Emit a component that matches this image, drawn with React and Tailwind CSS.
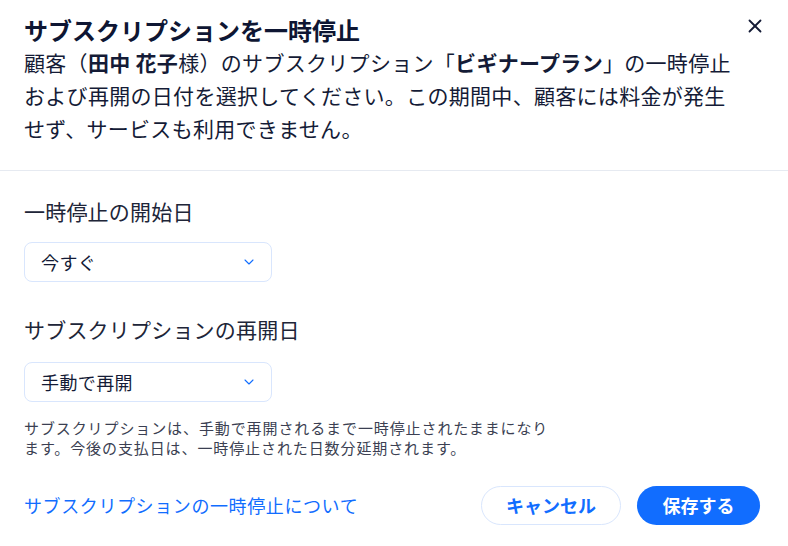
import { ChevronDown, X } from "lucide-react";

const font = { fontFamily: '"Noto Sans CJK JP", "Noto Sans", sans-serif' };

function Select({ value }) {
  return (
    <div className="flex items-center justify-between w-[248px] h-[40px] rounded-[8px] border border-[#d9e6fd] bg-white pl-[16px] pr-[14px]">
      <span className="text-[18px] leading-[24px] text-[#141b36] tracking-[0.4px]">{value}</span>
      <ChevronDown size={16} strokeWidth={1.6} className="text-[#116dff]" />
    </div>
  );
}

export default function App() {
  return (
    <div style={font} className="w-[788px] h-[546px] bg-white text-[#141b36] overflow-hidden">
      <div className="relative px-[24px] pt-[14px] pb-[25px] border-b border-[#e6eaf1]">
        <h1 className="text-[24px] leading-[32px] font-bold text-[#0e1633]">
          サブスクリプションを一時停止
        </h1>
        <p className="text-[21px] leading-[33px] tracking-[0.3px] text-[#141b36] w-[720px]">
          顧客（<b>田中 花子</b>様）のサブスクリプション「<b>ビギナープラン</b>」の一時停止<br />
          および再開の日付を選択してください。この期間中、顧客には料金が発生<br />
          せず、サービスも利用できません。
        </p>
        <button className="absolute top-[15px] right-[22px] text-[#141b36]">
          <X size={22} strokeWidth={2} />
        </button>
      </div>

      <div className="px-[24px] pt-[25px]">
        <div className="text-[21px] leading-[30px] tracking-[0.2px] text-[#202538]">一時停止の開始日</div>
        <div className="mt-[16px]">
          <Select value="今すぐ" />
        </div>

        <div className="mt-[32px] text-[21px] leading-[30px] tracking-[0.2px] text-[#202538]">
          サブスクリプションの再開日
        </div>
        <div className="mt-[18px]">
          <Select value="手動で再開" />
        </div>

        <div className="mt-[16px] flex flex-col text-[15px] tracking-[0.9px] text-[#3b3f52]">
          <div className="h-[20px] leading-[20px]">サブスクリプションは、手動で再開されるまで一時停止されたままになり</div>
          <div className="h-[20px] leading-[20px]">ます。今後の支払日は、一時停止された日数分延期されます。</div>
        </div>

        <div className="mt-[28px] flex items-center justify-between pr-[4px]">
          <a className="text-[18px] tracking-[0.6px] text-[#116dff]">
            サブスクリプションの一時停止について
          </a>
          <div className="flex items-center gap-[16px]">
            <button className="h-[39px] w-[140px] rounded-full border border-[#d9e6fd] bg-white text-[18px] font-bold text-[#116dff]">
              キャンセル
            </button>
            <button className="h-[39px] w-[123px] rounded-full bg-[#116dff] text-[18px] font-bold text-white">
              保存する
            </button>
          </div>
        </div>
      </div>
    </div>
  );
}
